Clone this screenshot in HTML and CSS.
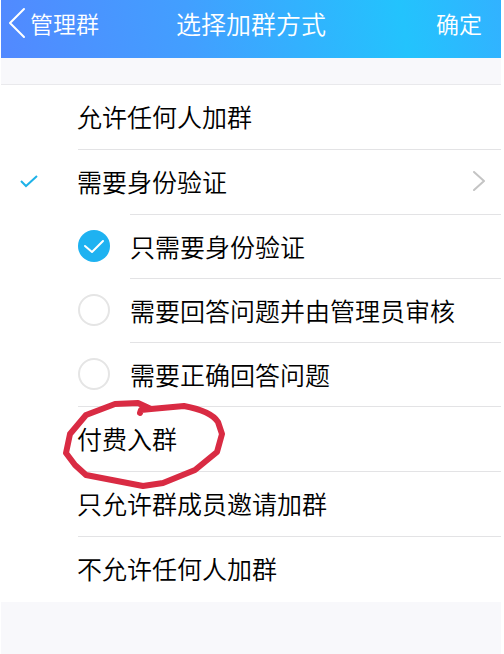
FILE: index.html
```
<!DOCTYPE html>
<html lang="zh-CN">
<head>
    <meta charset="UTF-8">
    <meta name="viewport" content="width=device-width, initial-scale=1.0">
    <title>选择加群方式</title>
    <link rel="stylesheet" href="styles.css">
</head>
<body>
    <header class="barra">
        <button type="button" class="volver">
            <svg width="18" height="32" viewBox="0 0 18 32"><path d="M16 2 L2 16 L16 30"/></svg>
            <span>管理群</span>
        </button>
        <h1>选择加群方式</h1>
        <button type="button" class="confirmar">确定</button>
    </header>

    <form class="lista">
        <label class="fila">
            <input type="radio" name="modo" value="todos">
            <svg class="marca" viewBox="0 0 18 14"><path d="M1 7 L6 12 L17 2"/></svg>
            <span>允许任何人加群</span>
        </label>
        <label class="fila larga">
            <input type="radio" name="modo" value="verificar" checked>
            <svg class="marca" viewBox="0 0 18 14"><path d="M1 7 L6 12 L17 2"/></svg>
            <span>需要身份验证</span>
            <svg class="flecha" viewBox="0 0 12 20"><path d="M1 1 L11 10 L1 19"/></svg>
        </label>

        <!-- Opciones de verificación -->
        <div class="opciones">
            <label class="opcion">
                <input type="radio" name="verif" value="solo" checked>
                <svg class="paloma" viewBox="0 0 32 32"><path d="M7 16 L14 22 L25 11"/></svg>
                <span>只需要身份验证</span>
            </label>
            <label class="opcion">
                <input type="radio" name="verif" value="revisar">
                <svg class="paloma" viewBox="0 0 32 32"><path d="M7 16 L14 22 L25 11"/></svg>
                <span>需要回答问题并由管理员审核</span>
            </label>
            <label class="opcion">
                <input type="radio" name="verif" value="responder">
                <svg class="paloma" viewBox="0 0 32 32"><path d="M7 16 L14 22 L25 11"/></svg>
                <span>需要正确回答问题</span>
            </label>
        </div>

        <label class="fila">
            <input type="radio" name="modo" value="pago">
            <svg class="marca" viewBox="0 0 18 14"><path d="M1 7 L6 12 L17 2"/></svg>
            <span>付费入群</span>
            <svg class="circulo" viewBox="0 0 164 92"><path d="M79 13 L80 10 L90 9 L77 3 L54 4 L25 15 L9 34 L5 53 L14 65 L25 75 L82 86 L102 83 L134 70 L156 52 L161 34 L157 22 Q150 11 123 6 L90 9"/></svg>
        </label>
        <label class="fila">
            <input type="radio" name="modo" value="miembros">
            <svg class="marca" viewBox="0 0 18 14"><path d="M1 7 L6 12 L17 2"/></svg>
            <span>只允许群成员邀请加群</span>
        </label>
        <label class="fila">
            <input type="radio" name="modo" value="nadie">
            <svg class="marca" viewBox="0 0 18 14"><path d="M1 7 L6 12 L17 2"/></svg>
            <span>不允许任何人加群</span>
        </label>
    </form>
</body>
</html>
```

FILE: styles.css
```
* {
    box-sizing: border-box;
}

html {
    background-color: #ffffff;
}

body {
    margin: 0 3px 0 1px;
    min-height: 100vh;
    font-family: "Noto Sans CJK SC", sans-serif;
    font-size: 25px;
    line-height: 36px;
    color: #000000;
    background-color: #f8f8fb;
}

svg {
    fill: none;
    stroke-linecap: round;
    stroke-linejoin: round;
}

/* Barra superior */
.barra {
    display: grid;
    grid-template-columns: 1fr auto 1fr;
    align-items: center;
    height: 58px;
    padding: 0 7px 12px;
    color: #ffffff;
    background: linear-gradient(80deg, #5289ff 0%, #429fff 38%, #23c3fd 80%, #32b2ff 100%);
}

.barra h1 {
    margin: 0;
    font-size: 25px;
    font-weight: 350;
}

.barra button {
    padding: 0;
    border: none;
    background: none;
    color: #ffffff;
    font-family: inherit;
    font-size: 23px;
    font-weight: 350;
    line-height: 36px;
    cursor: pointer;
}

.volver {
    display: flex;
    align-items: center;
    gap: 4px;
}

.volver svg {
    stroke: #ffffff;
    stroke-width: 2;
}

.barra .confirmar {
    justify-self: end;
    padding-right: 12px;
}

/* Lista */
.lista {
    margin-top: 26px;
    border-top: 1px solid #e9e9ec;
    background-color: #ffffff;
}

.fila, .opcion {
    position: relative;
    display: grid;
    align-items: center;
    padding-bottom: 3px;
    font-weight: 350;
    cursor: pointer;
}

.fila {
    grid-template-columns: 76px 1fr auto;
    height: 65px;
    padding-right: 16px;
}

.opcion {
    grid-template-columns: 52px 1fr;
    height: 64px;
}

.opciones {
    margin-left: 77px;
}

/* Línea inferior de cada fila */
.fila::after, .opcion::after {
    content: "";
    position: absolute;
    left: 77px;
    right: 0;
    bottom: 0;
    height: 1px;
    background-color: #e3e3e5;
}

.larga::after {
    left: 129px;
}

.opcion::after {
    left: 52px;
}

.opcion:last-child::after {
    left: 0;
}

.fila:last-child::after {
    display: none;
}

input {
    appearance: none;
    grid-area: 1 / 1;
    width: 32px;
    height: 32px;
    margin: 0;
    border-radius: 50%;
}

.opcion input {
    border: 2px solid #e5e5e5;
}

.opcion input:checked {
    border: none;
    background-color: #1eb2f1;
}

.marca {
    grid-area: 1 / 1;
    visibility: hidden;
    width: 18px;
    height: 14px;
    margin-left: 19px;
    stroke: #1eb2e8;
    stroke-width: 2;
    stroke-linecap: butt;
    stroke-linejoin: miter;
}

.paloma {
    grid-area: 1 / 1;
    visibility: hidden;
    width: 32px;
    height: 32px;
    stroke: #ffffff;
    stroke-width: 2;
}

input:checked + svg {
    visibility: visible;
}

.flecha {
    width: 12px;
    height: 20px;
    stroke: #c4c4c4;
    stroke-width: 2;
}

/* Trazo rojo sobre la opción de pago */
.circulo {
    position: absolute;
    z-index: 1;
    left: 60px;
    top: -7px;
    width: 164px;
    height: 92px;
    stroke: #d92b43;
    stroke-width: 6;
    pointer-events: none;
}
```
